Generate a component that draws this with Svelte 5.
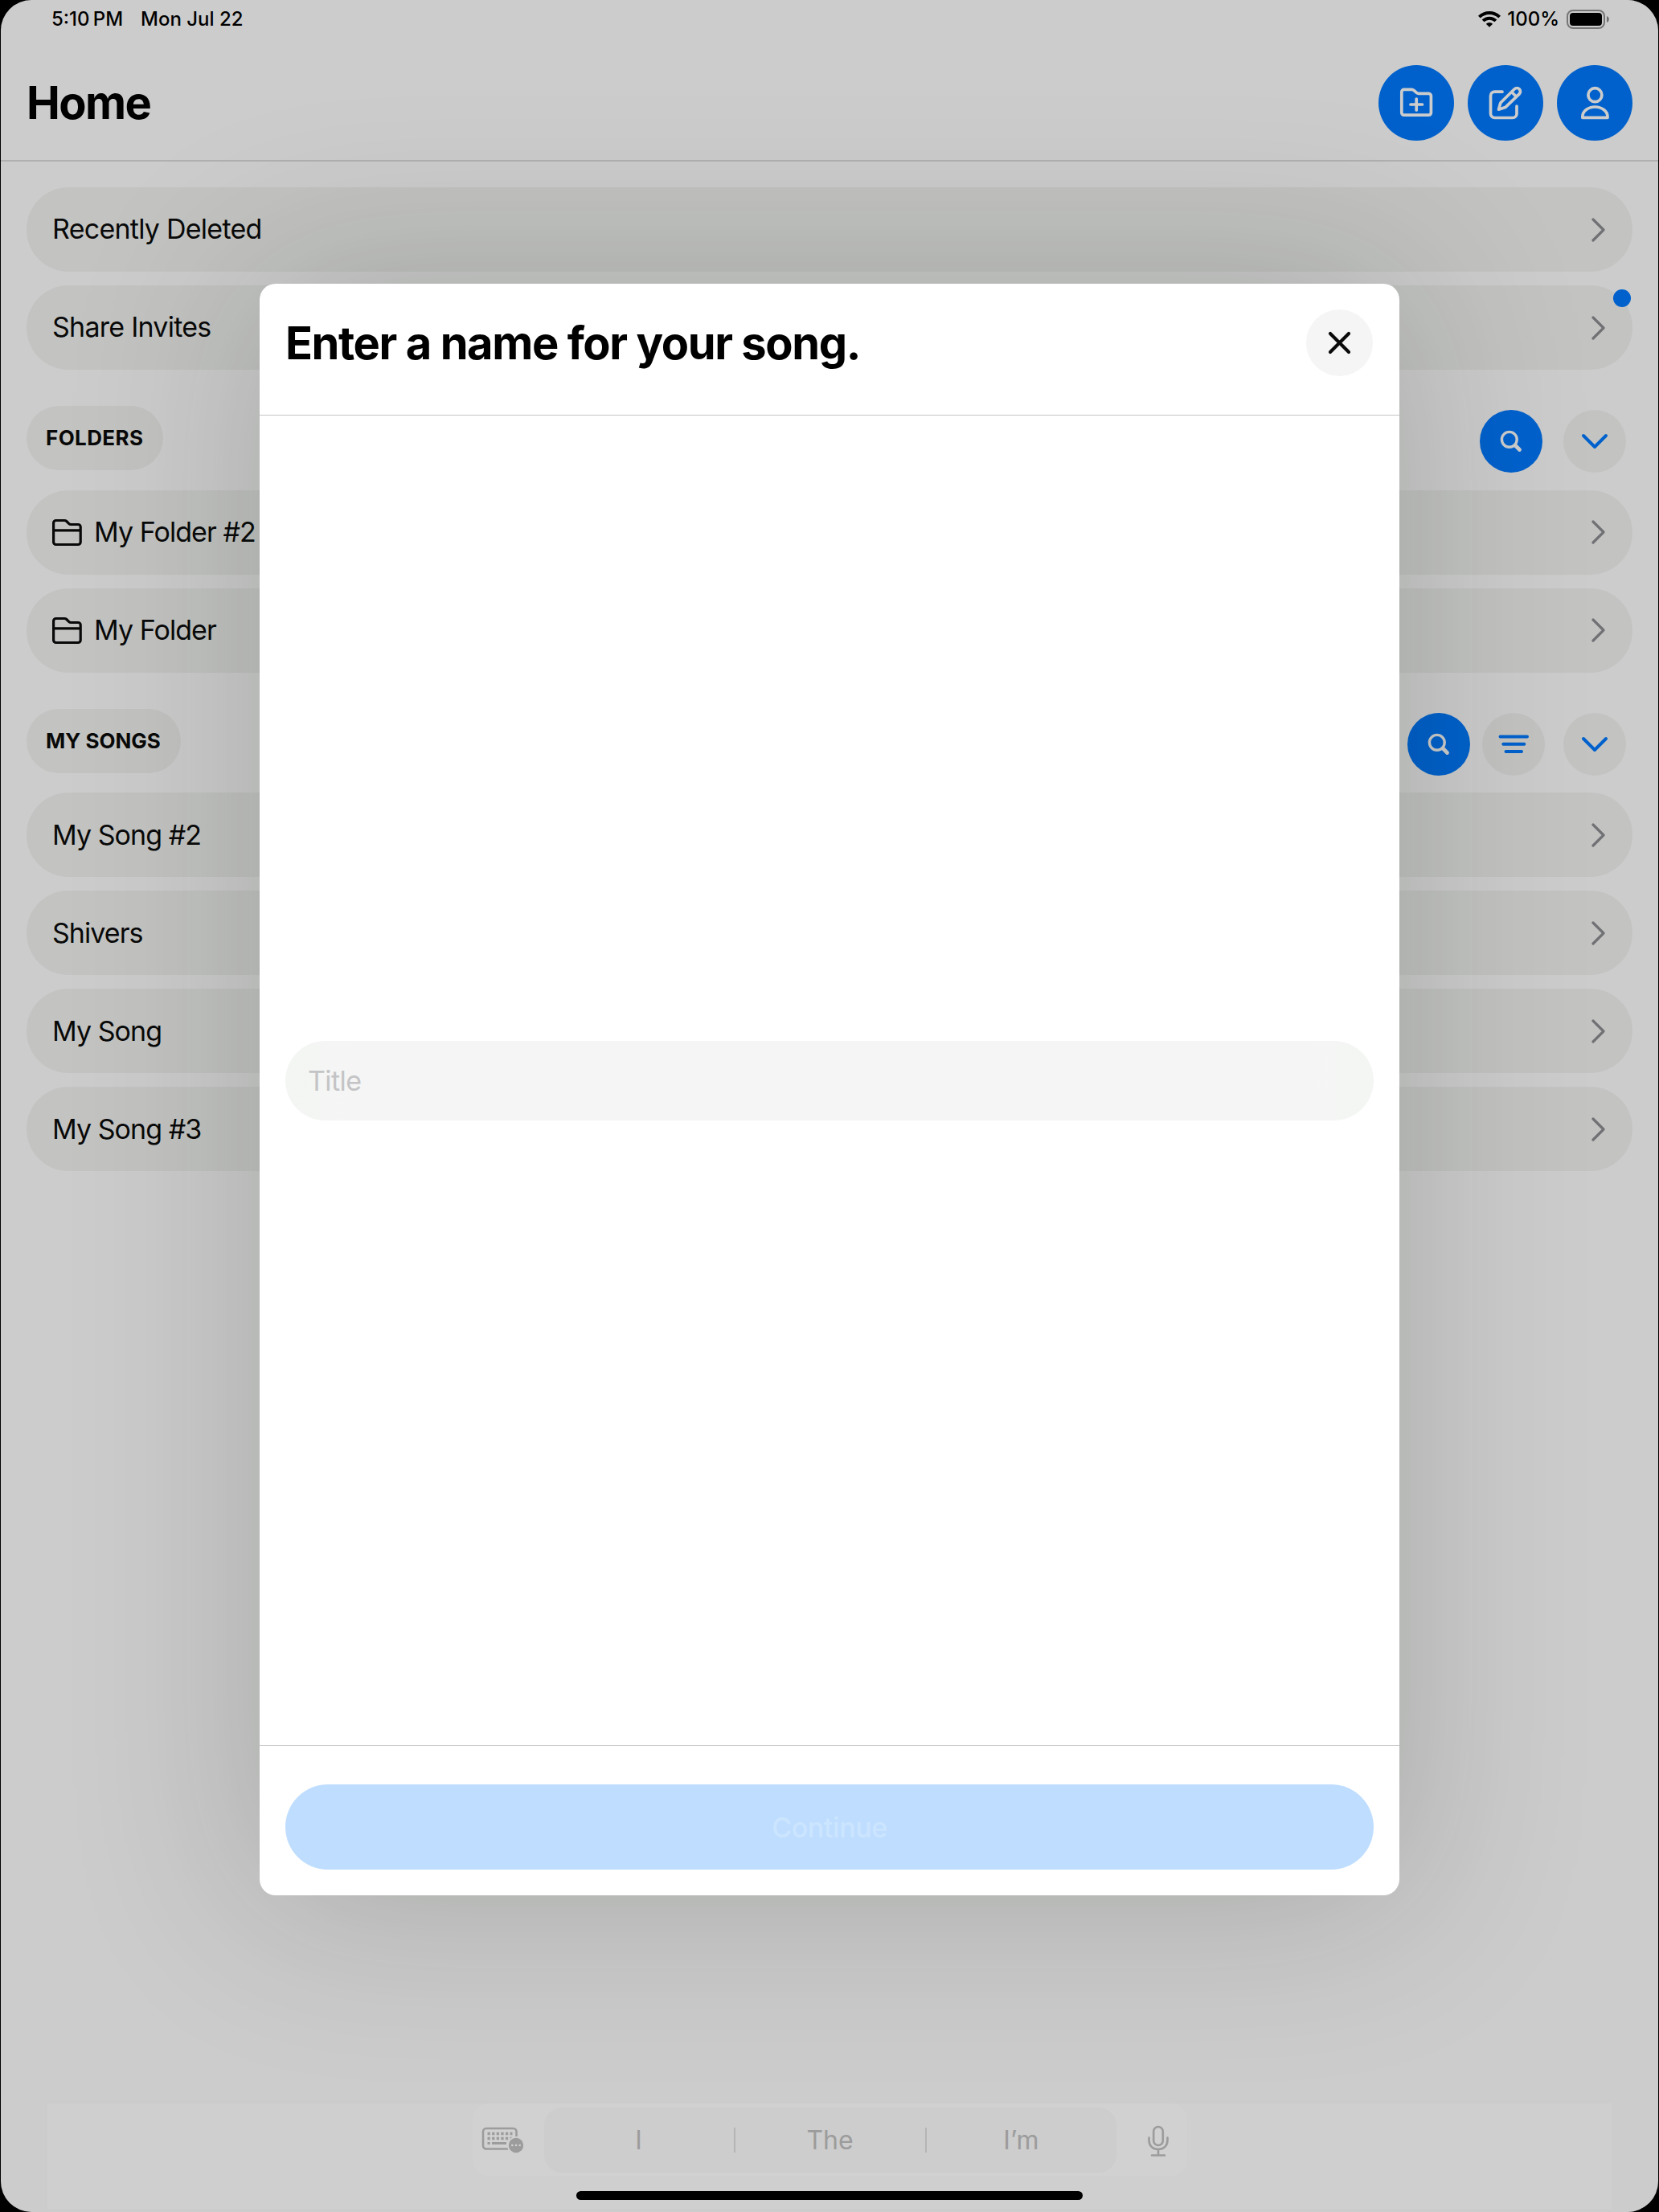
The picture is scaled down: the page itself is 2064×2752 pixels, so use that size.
<script>
  const links = [
    { label: 'Recently Deleted', badge: false },
    { label: 'Share Invites', badge: true },
  ];
  const folders = ['My Folder #2', 'My Folder'];
  const songs = ['My Song #2', 'Shivers', 'My Song', 'My Song #3'];
  const keyRows = [8.5, 14.5];
</script>

{#snippet chevronRight()}
  <svg class="chevron" width="18" height="32" viewBox="0 0 18 32" fill="none" stroke="#8e8e93" stroke-width="3.2" stroke-linecap="round" stroke-linejoin="round">
    <path d="M2 3 15 16 2 29" />
  </svg>
{/snippet}

{#snippet chevronDown()}
  <span class="round pale">
    <svg width="36" height="24" viewBox="0 0 36 24" fill="none" stroke="#007aff" stroke-width="4" stroke-linecap="round" stroke-linejoin="round">
      <path d="M4 5 18 19 32 5" />
    </svg>
  </span>
{/snippet}

{#snippet search()}
  <span class="round blue">
    <svg width="30" height="30" viewBox="0 0 30 30" fill="none" stroke="#fff" stroke-linecap="round">
      <circle cx="12.8" cy="12.8" r="9.4" stroke-width="3.4" />
      <path d="m20.3 20.3 5.2 5.2" stroke-width="4.8" />
    </svg>
  </span>
{/snippet}

<div class="screen">
  <div class="app">
    <header class="top">
      <h1>Home</h1>
      <div class="actions">
        <button aria-label="New folder">
          <svg width="44" height="44" viewBox="0 0 44 44" fill="none" stroke="#fff" stroke-width="3.7" stroke-linecap="round" stroke-linejoin="round">
            <path d="M3.800 8.400a3 3 0 0 1 3-3h9.600a4 4 0 0 1 2.600 1l3.400 3a4 4 0 0 0 2.600 1h12.400a3 3 0 0 1 3 3v20.800a3 3 0 0 1-3 3H6.800a3 3 0 0 1-3-3z" />
            <path d="M22.200 17v14M15 24h14.500" />
          </svg>
        </button>
        <button aria-label="New song">
          <svg width="44" height="44" viewBox="0 0 44 44" fill="none" stroke="#fff" stroke-width="3.7" stroke-linecap="round" stroke-linejoin="round">
            <path d="M18 8.200H8.500a5 5 0 0 0-5 5v22.300a5 5 0 0 0 5 5h22.500a5 5 0 0 0 5-5V26" />
            <path d="M13.500 30.200 15.800 22 33.200 4.800a4.200 4.200 0 0 1 6 6.100L21.800 27.600z M30 8.800l5.400 5.400" />
          </svg>
        </button>
        <button aria-label="Profile">
          <svg width="44" height="44" viewBox="0 0 44 44" fill="none" stroke="#fff" stroke-width="3.7" stroke-linejoin="round">
            <circle cx="22.400" cy="12.200" r="8.500" />
            <path d="M6.800 40.300v-1c0-7 7.200-12.300 15.600-12.300s15.600 5.300 15.600 12.300v1z" />
          </svg>
        </button>
      </div>
    </header>

    <main>
      <div class="list links">
        {#each links as link}
          <div class="row">
            <span>{link.label}</span>
            {@render chevronRight()}
            {#if link.badge}<i class="badge"></i>{/if}
          </div>
        {/each}
      </div>

      <div class="section folders">
        <h2>FOLDERS</h2>
        <div class="tools wide">
          {@render search()}
          {@render chevronDown()}
        </div>
      </div>
      <div class="list">
        {#each folders as folder}
          <div class="row">
            <svg class="folder" width="38" height="36" viewBox="0 0 38 36" fill="none" stroke="#0c0c0c" stroke-width="3.2" stroke-linejoin="round">
              <path d="M1.600 6.500a3 3 0 0 1 3-3h10.500a4 4 0 0 1 2.700 1l2.800 2.800a4 4 0 0 0 2.800 1.200h8.800a3 3 0 0 1 3 3V30.500a3 3 0 0 1-3 3H4.600a3 3 0 0 1-3-3zM1.600 15.800h33.600" />
            </svg>
            <span>{folder}</span>
            {@render chevronRight()}
          </div>
        {/each}
      </div>

      <div class="section">
        <h2>MY SONGS</h2>
        <div class="tools">
          {@render search()}
          <span class="round pale filter">
            <svg width="40" height="26" viewBox="0 0 40 26" stroke="#007aff" stroke-width="4" stroke-linecap="round">
              <path d="M3.500 3.500H37M7.300 12.800h26M10.500 22H30" />
            </svg>
          </span>
          {@render chevronDown()}
        </div>
      </div>
      <div class="list">
        {#each songs as song}
          <div class="row">
            <span>{song}</span>
            {@render chevronRight()}
          </div>
        {/each}
      </div>
    </main>
  </div>

  <div class="dim"></div>

  <div class="status">
    <span class="time">5:10&#8201;PM</span>
    <span class="date">Mon Jul 22</span>
    <svg class="wifi" width="28" height="22" viewBox="0 0 28 22" fill="none" stroke="#000" stroke-width="4">
      <path d="M1.400 8.100a18 18 0 0 1 25.200 0M6.100 12.900a11.300 11.300 0 0 1 15.800 0" />
      <path d="M14 20.800 9.800 16.700a6.200 6.200 0 0 1 8.400 0z" fill="#000" stroke="none" />
    </svg>
    <span class="percent">100%</span>
    <svg class="battery" width="54" height="24" viewBox="0 0 54 24">
      <rect x="1" y="1" width="46" height="22" rx="7" fill="none" stroke="#000" stroke-opacity=".42" stroke-width="2" />
      <rect x="4" y="4" width="40" height="16" rx="4" />
      <path d="M50 8c3.700 1.200 3.700 6.800 0 8z" fill-opacity=".45" />
    </svg>
  </div>

  <div class="modal">
    <div class="modal-head">
      <h3>Enter a name for your song.</h3>
      <button class="close" aria-label="Close">
        <svg width="32" height="32" viewBox="0 0 32 32" stroke="#0a0a0a" stroke-width="4.2" stroke-linecap="round">
          <path d="M4 4l23 23M27 4l-23 23" />
        </svg>
      </button>
    </div>
    <div class="modal-body">
      <div class="field"><span>Title</span></div>
    </div>
    <div class="modal-foot">
      <button class="continue"><span>Continue</span></button>
    </div>
  </div>

  <div class="keyboard">
    <div class="bar">
      <svg class="keys" width="54" height="36" viewBox="0 0 54 36" fill="#9c9c9c">
        <path d="M33 27.500H6a4 4 0 0 1-4-4V6a4 4 0 0 1 4-4h33.500a4 4 0 0 1 4 4v6" fill="none" stroke="#9c9c9c" stroke-width="2.600" />
        {#each keyRows as y}
          <path d="M7.500 {y}h31" fill="none" stroke="#9c9c9c" stroke-width="3.400" stroke-dasharray="3.300 2.300" />
        {/each}
        <path d="M7.500 20.500h3.200M13 20.500h18" fill="none" stroke="#9c9c9c" stroke-width="3.200" />
        <circle cx="43" cy="23" r="11" fill="#d1d1d1" />
        <circle cx="43" cy="23" r="9.200" />
        <g fill="#d1d1d1"><circle cx="38.300" cy="23" r="1.300" /><circle cx="43" cy="23" r="1.300" /><circle cx="47.700" cy="23" r="1.300" /></g>
      </svg>
      <div class="words">
        <span>I</span><i></i><span>The</span><i></i><span>I’m</span>
      </div>
      <svg class="mic" width="28" height="40" viewBox="0 0 28 40" fill="none" stroke="#9c9c9c" stroke-width="2.600" stroke-linecap="round">
        <rect x="8.200" y="2" width="11.600" height="23" rx="5.800" />
        <path d="M2.500 15.500v3c0 7 4.500 11.500 11.500 11.500s11.500-4.500 11.500-11.500v-3M14 30v7M6 37.500h16" />
      </svg>
    </div>
  </div>
  <div class="home-indicator"></div>
</div>

<style>
  :global(body) {
    background: #000;
  }

  .screen {
    position: relative;
    box-sizing: border-box;
    width: 2062px;
    height: 2752px;
    margin: 0 1px;
    border-radius: 38px;
    overflow: hidden;
    background: #fff;
    color: #0c0c0c;
    font-family: Inter, 'Liberation Sans', sans-serif;
    font-size: 34px;
  }

  h1,
  h2,
  h3 {
    margin: 0;
    white-space: nowrap;
  }

  button {
    display: grid;
    place-items: center;
    padding: 0;
    border: 0;
    font: inherit;
  }

  svg {
    display: block;
    flex: none;
  }

  .top {
    box-sizing: border-box;
    height: 201px;
    padding: 56px 32px 0;
    display: flex;
    align-items: center;
    justify-content: space-between;
    border-bottom: 2px solid #dcdcdc;
  }

  h1 {
    padding-top: 1px;
    font-size: 56px;
    font-weight: 700;
    letter-spacing: -1.6px;
    color: #000;
  }

  .actions {
    display: flex;
    gap: 17px;
  }

  .actions button {
    width: 94px;
    height: 94px;
    border-radius: 50%;
    background: #007aff;
  }

  main {
    padding: 32px 32px 0;
  }

  .list {
    display: flex;
    flex-direction: column;
    gap: 17px;
  }

  .row {
    position: relative;
    display: flex;
    align-items: center;
    height: 105px;
    box-sizing: border-box;
    padding: 0 33px 0 32px;
    border-radius: 52px;
    background: #f4f6f3;
    white-space: nowrap;
  }

  .row span {
    padding-bottom: 1px;
    letter-spacing: -0.95px;
  }

  .links .row span {
    padding-bottom: 2px;
    letter-spacing: -0.75px;
  }

  .chevron {
    margin-left: auto;
  }

  .folder {
    margin-right: 14px;
  }

  .badge {
    position: absolute;
    top: 5px;
    right: 2px;
    width: 22px;
    height: 22px;
    border-radius: 50%;
    background: #007aff;
  }

  .section {
    display: flex;
    justify-content: space-between;
    padding: 45px 8px 0 0;
    height: 104.5px;
  }

  h2 {
    height: 80px;
    padding: 0 25px 0 24px;
    border-radius: 40px;
    background: #f4f6f3;
    font-size: 26px;
    font-weight: 700;
    line-height: 79px;
  }

  .folders h2 {
    letter-spacing: 0.4px;
  }

  .tools {
    display: flex;
    padding-top: 5px;
    gap: 15px;
  }

  .tools.wide {
    gap: 26px;
  }

  .round {
    width: 78px;
    height: 78px;
    border-radius: 50%;
    display: grid;
    place-items: center;
  }

  .filter {
    margin-right: 8px;
  }

  .blue {
    background: #007aff;
  }

  .pale {
    background: #f4f6f3;
  }

  .dim {
    position: absolute;
    inset: 0;
    background: rgba(0, 0, 0, 0.2);
  }

  .status {
    position: absolute;
    top: 0;
    left: 0;
    right: 0;
    height: 47px;
    padding: 0 60px 0 63px;
    display: flex;
    align-items: center;
    color: #000;
    font-size: 24px;
    font-weight: 500;
    white-space: nowrap;
  }

  .date {
    margin-left: 22px;
  }

  .wifi {
    margin-left: auto;
  }

  .percent {
    margin: 0 9px 0 8px;
  }

  .modal {
    position: absolute;
    left: 322px;
    top: 353px;
    width: 1418px;
    height: 2005px;
    display: flex;
    flex-direction: column;
    border-radius: 20px;
    background: #fff;
    box-shadow: 0 0 230px 12px rgba(8, 24, 0, 0.185);
  }

  .modal-head {
    box-sizing: border-box;
    height: 164px;
    padding: 32px 33px 0 32px;
    display: flex;
    justify-content: space-between;
    border-bottom: 1px solid #c6c6c8;
  }

  h3 {
    font-size: 56px;
    font-weight: 700;
    line-height: 85px;
    letter-spacing: -1.42px;
    color: #000;
  }

  .close {
    width: 83px;
    height: 83px;
    border-radius: 50%;
    background: #f4f5f4;
  }

  .modal-body {
    flex: 1;
    display: flex;
    align-items: center;
    padding: 0 32px;
  }

  .field {
    flex: 1;
    height: 99px;
    padding-left: 28px;
    display: flex;
    align-items: center;
    border-radius: 50px;
    background: linear-gradient(90deg, #f3f6f3, #f5f5f5 90px calc(100% - 90px), #f3f6f3);
    color: #c4c4c6;
    letter-spacing: -0.6px;
  }

  .modal-foot {
    box-sizing: border-box;
    height: 187px;
    padding: 48px 32px 0;
    border-top: 1px solid #c6c6c8;
  }

  .continue {
    width: 100%;
    height: 106px;
    border-radius: 53px;
    background: #bfddff;
    color: #cce5ff;
    font-weight: 500;
    letter-spacing: -0.4px;
  }

  .keyboard {
    position: absolute;
    left: 58px;
    top: 2617px;
    width: 1946px;
    height: 131px;
    display: flex;
    justify-content: center;
    align-items: flex-start;
    background: #cfcfcf;
  }

  .bar {
    box-sizing: border-box;
    width: 889px;
    height: 90px;
    padding: 0 22px 0 11px;
    display: flex;
    align-items: center;
    justify-content: space-between;
    border-radius: 20px;
    background: #d1d1d1;
  }

  .keys {
    margin-top: 4px;
  }

  .mic {
    margin-top: 3px;
  }

  .words {
    width: 712px;
    height: 81px;
    margin-right: 14px;
    display: flex;
    align-items: center;
    border-radius: 22px;
    background: #cdcdcd;
    color: #9c9c9c;
    font-size: 32px;
  }

  .words span {
    flex: 1;
    text-align: center;
  }

  .words i {
    width: 2px;
    height: 31px;
    background: #b5b5b5;
  }

  .home-indicator {
    position: absolute;
    left: 716px;
    top: 2726px;
    width: 630px;
    height: 11px;
    border-radius: 6px;
    background: #000;
  }
</style>
